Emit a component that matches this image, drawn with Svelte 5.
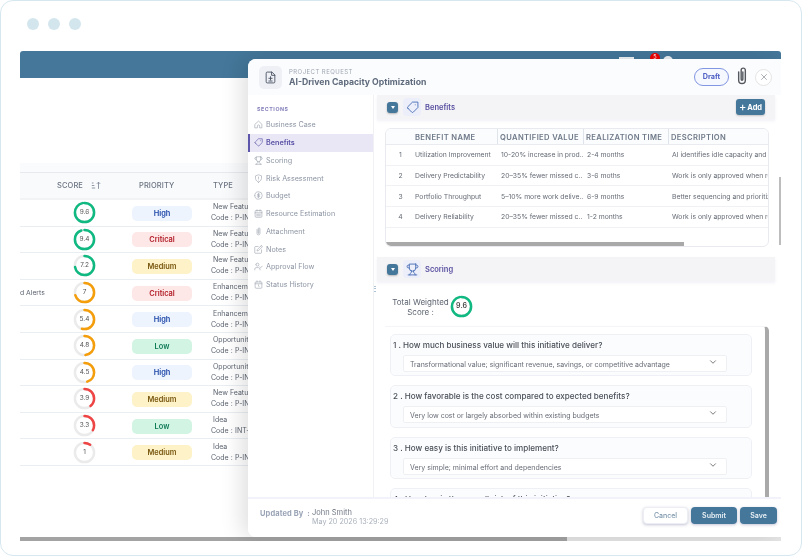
<script>
  const icons = {
    home: 'M3 11 12 3l9 8v10h-6v-5a3 3 0 0 0-6 0v5H3z',
    tag: 'M3.4 13.4l7.2 7.2a2 2 0 0 0 2.8 0L22 12V2H12L3.4 10.6a2 2 0 0 0 0 2.8zM17 7h.01',
    trophy: 'M6 9H4.5a2.5 2.5 0 0 1 0-5H6M18 9h1.5a2.5 2.5 0 0 0 0-5H18M4 22h16M10 14.66V17c0 .55-.47.98-.97 1.21C7.85 18.75 7 20.24 7 22M14 14.66V17c0 .55.47.98.97 1.21C16.15 18.75 17 20.24 17 22M18 2H6v7a6 6 0 0 0 12 0V2Z',
    shield: 'M12 22s8-4 8-10V5l-8-3-8 3v7c0 6 8 10 8 10zM12 8v4M12 16h.01',
    dollar: 'M2 12a10 10 0 1 0 20 0a10 10 0 1 0-20 0M15.5 8.5h-5a1.75 1.75 0 0 0 0 3.5h3a1.75 1.75 0 0 1 0 3.5h-5M12 18V6',
    calendar: 'M3 6a2 2 0 0 1 2-2h14a2 2 0 0 1 2 2v14a2 2 0 0 1-2 2H5a2 2 0 0 1-2-2zM3 10h18M8 2v4M16 2v4M7 14h10M7 18h10',
    clip: 'M8 7v10a4 4 0 0 0 8 0V5a2.5 2.5 0 0 0-5 0v11a1 1 0 0 0 2 0V7',
    notes: 'M11 4H4a2 2 0 0 0-2 2v14a2 2 0 0 0 2 2h14a2 2 0 0 0 2-2v-7M18.5 2.5a2.12 2.12 0 0 1 3 3L12 15l-4 1 1-4 9.5-9.5z',
    flow: 'M16 21v-2a4 4 0 0 0-4-4H6a4 4 0 0 0-4 4v2M5 7a4 4 0 1 0 8 0a4 4 0 1 0-8 0M16 13l2 2 4-4',
    history: 'M3 7a2 2 0 0 1 2-2h14a2 2 0 0 1 2 2v13a2 2 0 0 1-2 2H5a2 2 0 0 1-2-2zM3 10h18M8 2v4M16 2v4M12 13v3l2 2',
    doc: 'M14 2H6a2 2 0 0 0-2 2v16a2 2 0 0 0 2 2h12a2 2 0 0 0 2-2V8zM14 2v6h6M12 10.5v6M9 13.5h6M9 18.5h6',
    chevron: 'M6 9l6 6 6-6',
    close: 'M6 6l12 12M18 6 6 18'
  };

  const sections = [
    ['home', 'Business Case'], ['tag', 'Benefits'], ['trophy', 'Scoring'], ['shield', 'Risk Assessment'],
    ['dollar', 'Budget'], ['calendar', 'Resource Estimation'], ['clip', 'Attachment'], ['notes', 'Notes'],
    ['flow', 'Approval Flow'], ['history', 'Status History']
  ];

  const rows = [
    { name: '', score: 9.6, priority: 'High', type: 'New Feature', code: 'P-INT-001' },
    { name: '', score: 9.4, priority: 'Critical', type: 'New Feature', code: 'P-INT-002' },
    { name: '', score: 7.2, priority: 'Medium', type: 'New Feature', code: 'P-INT-003' },
    { name: 'd Alerts', score: 7, priority: 'Critical', type: 'Enhancement', code: 'P-INT-004' },
    { name: '', score: 5.4, priority: 'High', type: 'Enhancement', code: 'P-INT-005' },
    { name: '', score: 4.8, priority: 'Low', type: 'Opportunity', code: 'P-INT-006' },
    { name: '', score: 4.5, priority: 'High', type: 'Opportunity', code: 'P-INT-007' },
    { name: '', score: 3.9, priority: 'Medium', type: 'New Feature', code: 'P-INT-008' },
    { name: '', score: 3.3, priority: 'Low', type: 'Idea', code: 'INT-009' },
    { name: '', score: 1, priority: 'Medium', type: 'Idea', code: 'P-INT-010' }
  ];

  const benefits = [
    ['1', 'Utilization Improvement', '10-20% increase in prod...', '2-4 months', 'AI identifies idle capacity and optimizes allocation'],
    ['2', 'Delivery Predictability', '20–35% fewer missed c...', '3-6 moths', 'Work is only approved when ready for delivery'],
    ['3', 'Portfolio Throughput', '5–10% more work delive...', '6-9 months', 'Better sequencing and prioritization of work'],
    ['4', 'Delivery Reliability', '20–35% fewer missed c...', '1-2 months', 'Work is only approved when ready for delivery']
  ];

  const questions = [
    ['1 . How much business value will this initiative deliver?', 'Transformational value; significant revenue, savings, or competitive advantage'],
    ['2 . How favorable is the cost compared to expected benefits?', 'Very low cost or largely absorbed within existing budgets'],
    ['3 . How easy is this initiative to implement?', 'Very simple; minimal effort and dependencies'],
    ['4 . How low is the overall risk of this initiative?', 'Very low risk']
  ];

  const CIRC = 2 * Math.PI * 10;
  const ringColor = (s) => (s >= 7.1 ? '#10b981' : s >= 4 ? '#f59e0b' : '#ef4444');
</script>

{#snippet icon(name, cls)}
  <svg class={cls} viewBox="0 0 24 24" fill="none" stroke="currentColor" stroke-width="1.7" stroke-linecap="round" stroke-linejoin="round"><path d={icons[name]} /></svg>
{/snippet}

{#snippet ring(score)}
  <span class="ring">
    <svg viewBox="0 0 24 24">
      <circle cx="12" cy="12" r="10" class="track" />
      <circle cx="12" cy="12" r="10" class="arc" stroke={ringColor(score)} stroke-dasharray="{(score / 10) * CIRC} {CIRC}" transform="rotate(-90 12 12)" />
    </svg>
    <span class="ring-val">{score}</span>
  </span>
{/snippet}

{#snippet toggle()}
  <span class="toggle"><i></i></span>
{/snippet}

<div class="frame">
  <div class="dots"><i></i><i></i><i></i></div>

  <div class="app">
    <header class="topbar">
      <i class="tb-box"></i>
      <i class="tb-bell"></i>
      <span class="tb-badge">5</span>
      <i class="tb-avatar"></i>
    </header>

    <div class="main">
      <div class="band"></div>
      <div class="grid-row head">
        <span></span>
        <span class="score-h">SCORE
          <svg class="sort" viewBox="0 0 12 10" fill="none" stroke="#7b8494" stroke-width="1"><path d="M1 2h2M1 5h3M1 8h4M9 9V1M7 3l2-2 2 2" /></svg>
        </span>
        <span class="pri-h">PRIORITY</span>
        <span>TYPE</span>
      </div>
      {#each rows as r}
        <div class="grid-row">
          <span class="name">{r.name}</span>
          <span class="score-c">{@render ring(r.score)}</span>
          <span class="pill {r.priority.toLowerCase()}">{r.priority}</span>
          <span class="type">
            <span class="type-t">{r.type}</span>
            <span class="type-c"><b>Code :</b><em>{r.code}</em></span>
          </span>
        </div>
      {/each}
    </div>

    <div class="hscroll"><i></i></div>

    <section class="modal">
      <div class="m-head">
        <span class="doc-tile">{@render icon('doc', 'doc-i')}</span>
        <div class="m-title">
          <small>PROJECT REQUEST</small>
          <strong>AI-Driven Capacity Optimization</strong>
        </div>
        <span class="draft">Draft</span>
        {@render icon('clip', 'clip-i')}
        <span class="close">{@render icon('close', 'close-i')}</span>
      </div>

      <div class="m-body">
        <nav class="side">
          <div class="side-label">SECTIONS</div>
          {#each sections as [ic, label]}
            <div class="side-item" class:active={label === 'Benefits'}>
              {@render icon(ic, 'side-i')}
              <span>{label}</span>
            </div>
          {/each}
          <span class="resize">⋮</span>
        </nav>

        <div class="content">
          <div class="sec-head">
            {@render toggle()}
            <span class="tile">{@render icon('tag', 'tile-i')}</span>
            <span class="sec-title">Benefits</span>
            <span class="add"><b>+</b>Add</span>
          </div>

          <div class="b-table">
            <div class="b-row b-head">
              <span></span><span>BENEFIT NAME</span><span>QUANTIFIED VALUE</span><span>REALIZATION TIME</span><span>DESCRIPTION</span>
            </div>
            {#each benefits as b}
              <div class="b-row">
                {#each b as c}<span>{c}</span>{/each}
              </div>
            {/each}
            <div class="b-scroll"><i></i></div>
          </div>

          <div class="sec-head second">
            {@render toggle()}
            <span class="tile">{@render icon('trophy', 'tile-i')}</span>
            <span class="sec-title">Scoring</span>
          </div>

          <div class="total">
            <span>Total Weighted<br />Score :</span>
            {@render ring(9.6)}
          </div>

          <div class="q-panel">
            {#each questions as [q, a]}
              <div class="q-card">
                <div class="q-text">{q}</div>
                <div class="q-select">
                  <span>{a}</span>
                  {@render icon('chevron', 'chev')}
                </div>
              </div>
            {/each}
          </div>

          <i class="v-scroll"></i>
        </div>
      </div>

      <footer class="m-foot">
        <span class="upd">Updated By&nbsp; :</span>
        <div class="who"><span>John Smith</span><small>May 20 2026 13:29:29</small></div>
        <div class="btns">
          <span class="btn cancel">Cancel</span>
          <span class="btn submit">Submit</span>
          <span class="btn save">Save</span>
        </div>
      </footer>
    </section>
  </div>
</div>

<style>
  :global(body) { margin: 0; background: #fff; }
  * { box-sizing: border-box; }
  .frame {
    width: 802px; height: 556px; border: 1px solid #d6e7ef; border-radius: 13px;
    font-family: Inter, "Liberation Sans", sans-serif; overflow: hidden; background: #fff;
    filter: blur(0.4px);
  }
  i { display: block; }
  .dots { display: flex; gap: 9px; padding: 17px 0 0 26px; }
  .dots i { width: 12px; height: 12px; border-radius: 50%; background: #d3e6ee; }

  .app { position: relative; margin: 21px 0 0 19px; width: 761px; height: 490px; display: flex; flex-direction: column; overflow: hidden; }
  .topbar { height: 27px; background: #44779a; border-radius: 3px 3px 0 0; flex: none; display: flex; justify-content: flex-end; align-items: flex-start; padding: 5px 108px 0 0; }
  .tb-box { width: 15px; height: 6px; margin-top: 1px; background: #eef3f6; margin-right: 11px; }
  .tb-bell { width: 4px; height: 4px; margin-top: 3px; background: #cfdde6; margin-right: 1px; }
  .tb-badge { width: 10px; height: 10px; border-radius: 50%; background: #f00000; color: #fff; font-size: 5.5px; text-align: center; line-height: 9px; margin-top: -3px; margin-right: 3px; }
  .tb-avatar { width: 10px; height: 10px; border-radius: 50%; background: #eef3f6; }

  .main { flex: 1; padding-top: 85px; }
  .band { height: 9px; background: #fafbfc; }
  .grid-row { display: grid; grid-template-columns: 37px 75px 81px 1fr; align-items: center; height: 26.6px; border-bottom: 1px solid #e9eef3; font-size: 7px; color: #5d6470; }
  .head { height: 28px; background: #f9fafc; border-top: 1px solid #e6eaef; border-bottom: 2px solid #f2f3f5; font-size: 7.5px; font-weight: 500; color: #6b7482; letter-spacing: .1px; padding-bottom: 1px; }
  .score-h { display: flex; align-items: center; gap: 8px; }
  .sort { width: 10px; height: 9px; }
  .pri-h { padding-left: 7px; }
  .name { white-space: nowrap; overflow: hidden; font-size: 6.8px; }
  .score-c { padding-left: 16px; display: flex; }
  .ring { position: relative; display: block; width: 23px; height: 23px; flex: none; }
  .ring svg { width: 100%; height: 100%; display: block; }
  .track { fill: none; stroke: #ebebeb; stroke-width: 2.6; }
  .arc { fill: none; stroke-width: 2.6; stroke-linecap: round; }
  .ring-val { position: absolute; inset: 0; display: flex; align-items: center; justify-content: center; font-size: 6.5px; color: #555; padding-bottom: 1px; }
  .pill { display: flex; align-items: center; justify-content: center; width: 60px; height: 15px; border-radius: 5px; font-size: 7.4px; font-weight: 600; margin-top: 1px; }
  .high { background: #edf4fe; color: #1e46a8; }
  .critical { background: #fde7e7; color: #b3202a; }
  .medium { background: #fdf2c8; color: #79570f; }
  .low { background: #d2f4e3; color: #0b7a55; }
  .type { display: flex; flex-direction: column; gap: 2px; white-space: nowrap; margin-top: -1px; }
  .type-c { display: flex; margin-left: -2px; }
  .type-c b { font-weight: 400; width: 24px; }
  .type-c em { font-style: normal; }

  .hscroll { height: 4px; background: #e6e6e6; flex: none; }
  .hscroll i { width: 547px; height: 4px; background: #a3a3a3; }

  .modal { position: absolute; left: 228px; top: 8px; right: 0; bottom: 4px; background: #fff; border-radius: 8px 0 0 8px; display: flex; flex-direction: column; box-shadow: -6px 0 22px rgba(0, 0, 0, .13); }
  .m-head { height: 36px; flex: none; background: #fbfcfe; border-radius: 8px 0 0 0; display: flex; align-items: center; padding: 0 9px 0 11px; }
  .doc-tile { width: 23px; height: 23px; border-radius: 5px; background: #eef0f6; display: flex; align-items: center; justify-content: center; color: #4b5563; margin-right: 7px; }
  .doc-tile :global(.doc-i) { width: 13px; height: 13px; }
  .m-title { display: flex; flex-direction: column; gap: 2px; flex: 1; }
  .m-title small { font-size: 6px; color: #a0a6b2; letter-spacing: .45px; }
  .m-title strong { font-size: 8.7px; color: #5f6b7c; font-weight: 700; }
  .draft { width: 35px; height: 18px; border: 1px solid #8296e2; border-radius: 9px; background: #f6f8ff; color: #4f60c6; font-size: 7.2px; font-weight: 700; display: flex; align-items: center; justify-content: center; margin-right: 3px; margin-top: -1px; }
  .m-head :global(.clip-i) { width: 20px; height: 20px; color: #55595f; margin-right: 3px; margin-top: -2px; }
  .close { width: 17px; height: 17px; border: 1px solid #e3e3e3; border-radius: 50%; display: flex; align-items: center; justify-content: center; color: #8a8f96; background: #fff; }
  .close :global(.close-i) { width: 10px; height: 10px; }

  .m-body { flex: 1; display: flex; min-height: 0; }
  .side { width: 126px; flex: none; border-right: 1px solid #f0f1f5; padding-top: 10px; position: relative; }
  .side-label { font-size: 5.3px; font-weight: 700; letter-spacing: .55px; color: #8480bb; padding: 1px 0 0 9px; height: 11px; }
  .side-item { height: 17.75px; display: flex; align-items: center; gap: 3px; padding-left: 6px; font-size: 7.2px; color: #8d95a3; }
  .side-item :global(.side-i) { width: 9px; height: 9px; flex: none; color: #a1a7b2; }
  .side-item.active { background: #e9e7f6; border-left: 2px solid #5d56aa; padding-left: 4px; color: #5a53a6; font-weight: 600; }
  .side-item.active :global(.side-i) { color: #5a53a6; }
  .resize { position: absolute; right: -2px; top: 189px; font-size: 8px; color: #44779a; line-height: 8px; width: 4px; }

  .content { flex: 1; min-width: 0; padding: 0 6px 0 3px; overflow: hidden; position: relative; display: flex; flex-direction: column; }
  .sec-head { height: 24px; flex: none; background: #f4f4f6; display: flex; align-items: center; padding: 0 10px; box-shadow: 0 2px 3px rgba(120, 120, 190, .1); }
  .second { margin-top: 10px; }
  .toggle { width: 11px; height: 11px; background: #44779a; border-radius: 3px; display: flex; align-items: center; justify-content: center; margin-right: 5px; box-shadow: 0 1px 2px rgba(0,0,0,.25); }
  .toggle i { width: 0; height: 0; border-left: 2.5px solid transparent; border-right: 2.5px solid transparent; border-top: 3px solid #fff; }
  .tile { width: 18px; height: 18px; border-radius: 4px; background: #eceefa; display: flex; align-items: center; justify-content: center; color: #4a6fb5; margin-right: 4px; }
  .tile :global(.tile-i) { width: 13px; height: 13px; }
  .sec-title { font-size: 7.5px; font-weight: 600; color: #574fa0; flex: 1; }
  .add { width: 29px; height: 16px; background: #44779a; color: #fff; border-radius: 3px; font-size: 7.5px; font-weight: 700; display: flex; align-items: center; justify-content: center; gap: 1px; box-shadow: 0 1px 2px rgba(0,0,0,.2); }
  .add b { font-weight: 500; font-size: 11px; line-height: 10px; }

  .b-table { margin: 9px 0 0 8px; width: 384px; height: 119px; flex: none; border: 1px solid #e8eaef; border-radius: 6px; overflow: hidden; position: relative; }
  .b-row { display: grid; grid-template-columns: 29px 82px 86px 85px 1fr; height: 20.7px; align-items: center; border-bottom: 1px solid #f0f1f4; font-size: 6.8px; color: #666c76; white-space: nowrap; }
  .b-row span { overflow: hidden; padding-left: 4px; }
  .b-row span:first-child { text-align: center; padding-left: 0; }
  .b-row span:nth-child(2) { padding-left: 0; }
  .b-head { height: 16px; font-size: 7.6px; font-weight: 600; color: #6e7989; letter-spacing: .35px; background: #fbfcfd; border-bottom: 1px solid #e9ebf0; }
  .b-head span { height: 100%; display: flex; align-items: center; padding-left: 2px; padding-top: 1px; border-left: 1px solid #dfe3ea; }
  .b-head span:first-child { border-left: 0; }
  .b-head span:nth-child(2) { border-left: 0; }
  .b-scroll { position: absolute; left: 0; right: 0; bottom: 0; height: 4px; }
  .b-scroll i { width: 298px; height: 4px; background: #a9a9a9; }

  .total { display: flex; align-items: center; margin: 14px 0 0 8px; height: 23px; flex: none; font-size: 8px; line-height: 10px; color: #5d6470; text-align: center; }
  .total > span:first-child { width: 65px; padding-left: 6px; }
  .total :global(.ring-val) { font-weight: 600; color: #444; font-size: 7px; }

  .q-panel { margin: 8px 0 0 8px; width: 384px; flex: 1; border-top: 1px solid #f4f5f8; border-radius: 0 5px 0 0; border-right: 4px solid #a9a9a9; padding: 7px 0 0 5px; display: flex; flex-direction: column; gap: 9px; overflow: hidden; }
  .q-card { width: 362px; height: 42.3px; flex: none; background: #fbfcfe; border: 1px solid #eef0f5; border-radius: 5px; padding: 6px 0 0 2px; }
  .q-text { font-size: 8.1px; color: #4a4f58; font-weight: 500; line-height: 9px; white-space: nowrap; }
  .q-select { margin: 5px 0 0 10px; width: 324px; height: 17px; background: #fff; border: 1px solid #eff0f4; border-radius: 2px; display: flex; align-items: center; justify-content: space-between; padding: 0 8px 0 6px; font-size: 7px; color: #666b75; }
  .q-select span { padding-top: 2px; }
  .q-select :global(.chev) { width: 10px; height: 10px; color: #444; margin-top: -3px; }
  .v-scroll { position: absolute; right: 0; top: 82px; width: 2px; height: 68px; background: #bdbdbd; }

  .m-foot { height: 40px; flex: none; border-top: 2px solid #f2f3fa; background: #fff; border-radius: 0 0 0 8px; display: flex; padding: 0 4px 0 12px; font-size: 7.5px; position: relative; }
  .upd { color: #9aa4b6; font-weight: 700; margin-top: 10px; width: 52px; white-space: nowrap; letter-spacing: .1px; }
  .who { display: flex; flex-direction: column; margin-top: 10px; line-height: 8.5px; color: #6f7682; }
  .who small { font-size: 7.2px; color: #a9b0bb; }
  .btns { margin-left: auto; display: flex; gap: 3px; padding-top: 8px; }
  .btn { height: 17px; border-radius: 4px; display: flex; align-items: center; justify-content: center; font-size: 7px; font-weight: 600; color: #e8f0f5; background: #44779a; box-shadow: 0 1px 3px rgba(60, 60, 120, .3); }
  .cancel { width: 45px; background: #fff; color: #7d97ad; font-weight: 500; border: 1px solid #eceef3; }
  .submit { width: 46px; }
  .save { width: 37px; }
</style>
